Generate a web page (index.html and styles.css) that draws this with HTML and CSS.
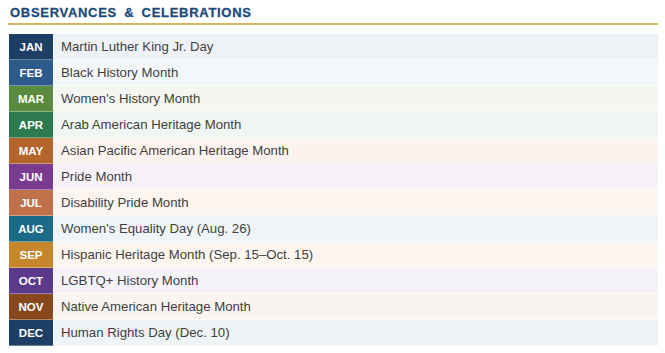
FILE: index.html
```html
<!DOCTYPE html>
<html>
<head>
<meta charset="utf-8">
<link rel="stylesheet" href="styles.css">
</head>
<body>
<div class="panel">
  <h1 class="title">OBSERVANCES &amp; CELEBRATIONS</h1>
  <ul class="list">
    <li class="row r-jan"><span class="badge">JAN</span><span class="label">Martin Luther King Jr. Day</span></li>
    <li class="row r-feb"><span class="badge">FEB</span><span class="label">Black History Month</span></li>
    <li class="row r-mar"><span class="badge">MAR</span><span class="label">Women's History Month</span></li>
    <li class="row r-apr"><span class="badge">APR</span><span class="label">Arab American Heritage Month</span></li>
    <li class="row r-may"><span class="badge">MAY</span><span class="label">Asian Pacific American Heritage Month</span></li>
    <li class="row r-jun"><span class="badge">JUN</span><span class="label">Pride Month</span></li>
    <li class="row r-jul"><span class="badge">JUL</span><span class="label">Disability Pride Month</span></li>
    <li class="row r-aug"><span class="badge">AUG</span><span class="label">Women's Equality Day (Aug. 26)</span></li>
    <li class="row r-sep"><span class="badge">SEP</span><span class="label">Hispanic Heritage Month (Sep. 15–Oct. 15)</span></li>
    <li class="row r-oct"><span class="badge">OCT</span><span class="label">LGBTQ+ History Month</span></li>
    <li class="row r-nov"><span class="badge">NOV</span><span class="label">Native American Heritage Month</span></li>
    <li class="row r-dec"><span class="badge">DEC</span><span class="label">Human Rights Day (Dec. 10)</span></li>
  </ul>
</div>
</body>
</html>
```
FILE: styles.css
```css
html, body { margin: 0; padding: 0; background: #ffffff; }
body { font-family: "Liberation Sans", Arial, sans-serif; }
.panel { padding: 4px 7px 0 8px; width: 650px; }
.title {
  margin: 0;
  padding-left: 2px;
  font-size: 13px;
  font-weight: bold;
  letter-spacing: 0.7px;
  word-spacing: 3px;
  color: #1d4a7c;
  line-height: 17px;
  height: 19px;
  -webkit-text-stroke: 0.3px #1d4a7c;
}
.list {
  list-style: none;
  margin: 0;
  padding: 0;
  border-top: 2px solid #d6b45a;
  padding-top: 9px;
}
.row {
  display: flex;
  align-items: stretch;
  height: 26px;
  margin-left: 1px;
  box-sizing: border-box;
  border-bottom: 1px solid rgba(255,255,255,0.6);
}
.badge {
  width: 44px;
  flex: none;
  display: flex;
  align-items: center;
  justify-content: center;
  color: #ffffff;
  font-weight: bold;
  font-size: 11.5px;
  border-right: 1px solid #ffffff;
  border-bottom: 1px solid rgba(255,255,255,0.35);
  margin-bottom: -1px;
}
.label {
  display: flex;
  align-items: center;
  padding-left: 7px;
  font-size: 13.2px;
  color: #3f3f3f;
}
.r-jan { background: #eef2f6; } .r-jan .badge { background: #1d3f66; }
.r-feb { background: #f3f7fa; } .r-feb .badge { background: #2d5c8c; }
.r-mar { background: #f3f6f1; } .r-mar .badge { background: #5a8a3d; }
.r-apr { background: #f1f6f2; } .r-apr .badge { background: #2e7a4f; }
.r-may { background: #fcf3ee; } .r-may .badge { background: #b3652b; }
.r-jun { background: #f7f2f8; } .r-jun .badge { background: #7a3a8f; }
.r-jul { background: #fbf4ef; } .r-jul .badge { background: #c0714a; }
.r-aug { background: #eff5f7; } .r-aug .badge { background: #1b6a88; }
.r-sep { background: #fcf6ee; } .r-sep .badge { background: #c6862c; }
.r-oct { background: #f5f2f8; } .r-oct .badge { background: #5b3a8b; }
.r-nov { background: #f9f4ef; } .r-nov .badge { background: #87481e; }
.r-dec { background: #eef3f6; } .r-dec .badge { background: #1d3f66; }
```
